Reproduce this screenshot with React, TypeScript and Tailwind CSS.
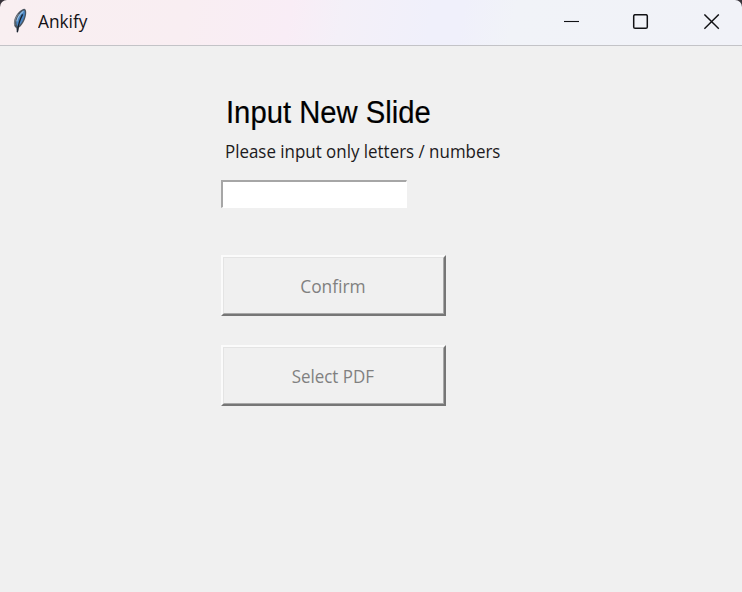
import React from "react";

function Feather() {
  return (
    <svg width="16" height="26" viewBox="0 0 16 26" className="block shrink-0">
      <path d="M12.4 .8 C15 1.2 14.6 7.4 12.8 11.4 C11.2 15 9 18.4 6.8 19.8 L5.9 24.4 L4.9 24.4 L4.3 20 C1.2 18.4 1.4 13 3.4 9 C5.4 5 9 1.4 12.4 .8Z" fill="#4b5560" />
      <path d="M12.2 2.2 C13.6 4 12.8 8.2 11.4 11.2 C9.8 14.6 7.8 17.4 5.8 18.4 C3.6 16 4.2 12 5.8 9 C7.4 5.6 9.8 2.8 12.2 2.2Z" fill="#4a86c4" />
      <path d="M11.4 3.4 C8.4 5.6 5.6 9.6 4.8 13.4" fill="none" stroke="#9cc3e2" strokeWidth="1.1" />
      <path d="M2.9 17 C2 14 3.6 9.4 6.4 6" fill="none" stroke="#8d949a" strokeWidth=".9" />
      <path d="M10.6 6.4 C8.4 10.4 6.4 15 5.4 24" fill="none" stroke="#17202c" strokeWidth="1.3" />
    </svg>
  );
}

function TitleBar() {
  return (
    <div className="bg-[#38333a]">
      <header className="flex h-[46px] items-start rounded-t-[7px] border-b border-[#c3c3c7] bg-[linear-gradient(100deg,#f9eff1_0%,#f9eef2_25%,#f9edf6_39%,#f4f0f8_46%,#f0f0fb_58%,#f0f0fb_62%,#f1f3f8_69%,#f1f2f8_100%)] pl-3">
        <div className="pt-2">
          <Feather />
        </div>
        <h1 className="ml-[10px] mt-[8px] origin-left scale-x-[0.96] font-['Open_Sans','Noto_Sans',sans-serif] text-[18px] leading-[26px] text-[#141216]">
          Ankify
        </h1>
        <div className="ml-auto flex pr-[22px] pt-[14px]">
          <svg width="156" height="16" viewBox="0 0 156 16" fill="none" stroke="#111114">
            <path d="M0 7.5H15" strokeWidth="1.1" />
            <rect x="69.7" y=".7" width="13.6" height="13.6" rx="1.4" strokeWidth="1.5" />
            <path d="M140.4 .4L154.8 14.8M154.8 .4L140.4 14.8" strokeWidth="1.4" />
          </svg>
        </div>
      </header>
    </div>
  );
}

function RaisedButton({ label, textClass }: { label: string; textClass: string }) {
  return (
    <button className="flex h-[61px] w-[225px] border-t-2 border-l-2 border-r-2 border-b-2 border-t-[#fbfbfb] border-l-[#fbfbfb] border-r-[#767676] border-b-[#767676] bg-[#f0f0f0]">
      <span className="flex h-full w-full items-center justify-center border border-t-[#e4e4e4] border-l-[#e4e4e4] border-r-[#a8a8a8] border-b-[#a8a8a8] pt-px pr-[2px] font-['Open_Sans','Noto_Sans',sans-serif] text-[18px] text-[#808080]">
        <span className={`block whitespace-nowrap ${textClass}`}>{label}</span>
      </span>
    </button>
  );
}

export default function App() {
  return (
    <div className="flex h-[592px] w-[742px] flex-col overflow-hidden bg-[#f0f0f0]">
      <TitleBar />
      <main className="flex flex-col items-start pl-[221px] pt-[49px]">
        <h2 className="ml-[5px] origin-left scale-x-[0.943] whitespace-nowrap font-['Liberation_Sans',sans-serif] text-[31px] leading-[36px] text-black [-webkit-text-stroke:0.2px_black]">
          Input New Slide
        </h2>
        <p className="ml-[4px] mt-[8px] origin-left scale-x-[0.94] whitespace-nowrap font-['Open_Sans','Noto_Sans',sans-serif] text-[18px] leading-[24px] text-[#1c1a20]">
          Please input only letters / numbers
        </p>
        <input className="mt-[17px] h-[28px] w-[186px] border-t-2 border-l-2 border-r border-b border-t-[#a6a6a6] border-l-[#a6a6a6] border-r-white border-b-white bg-white outline-none" />
        <div className="mt-[47px] flex flex-col gap-[29px]">
          <RaisedButton label="Confirm" textClass="scale-x-[0.965]" />
          <RaisedButton label="Select PDF" textClass="scale-x-[0.94]" />
        </div>
      </main>
    </div>
  );
}
